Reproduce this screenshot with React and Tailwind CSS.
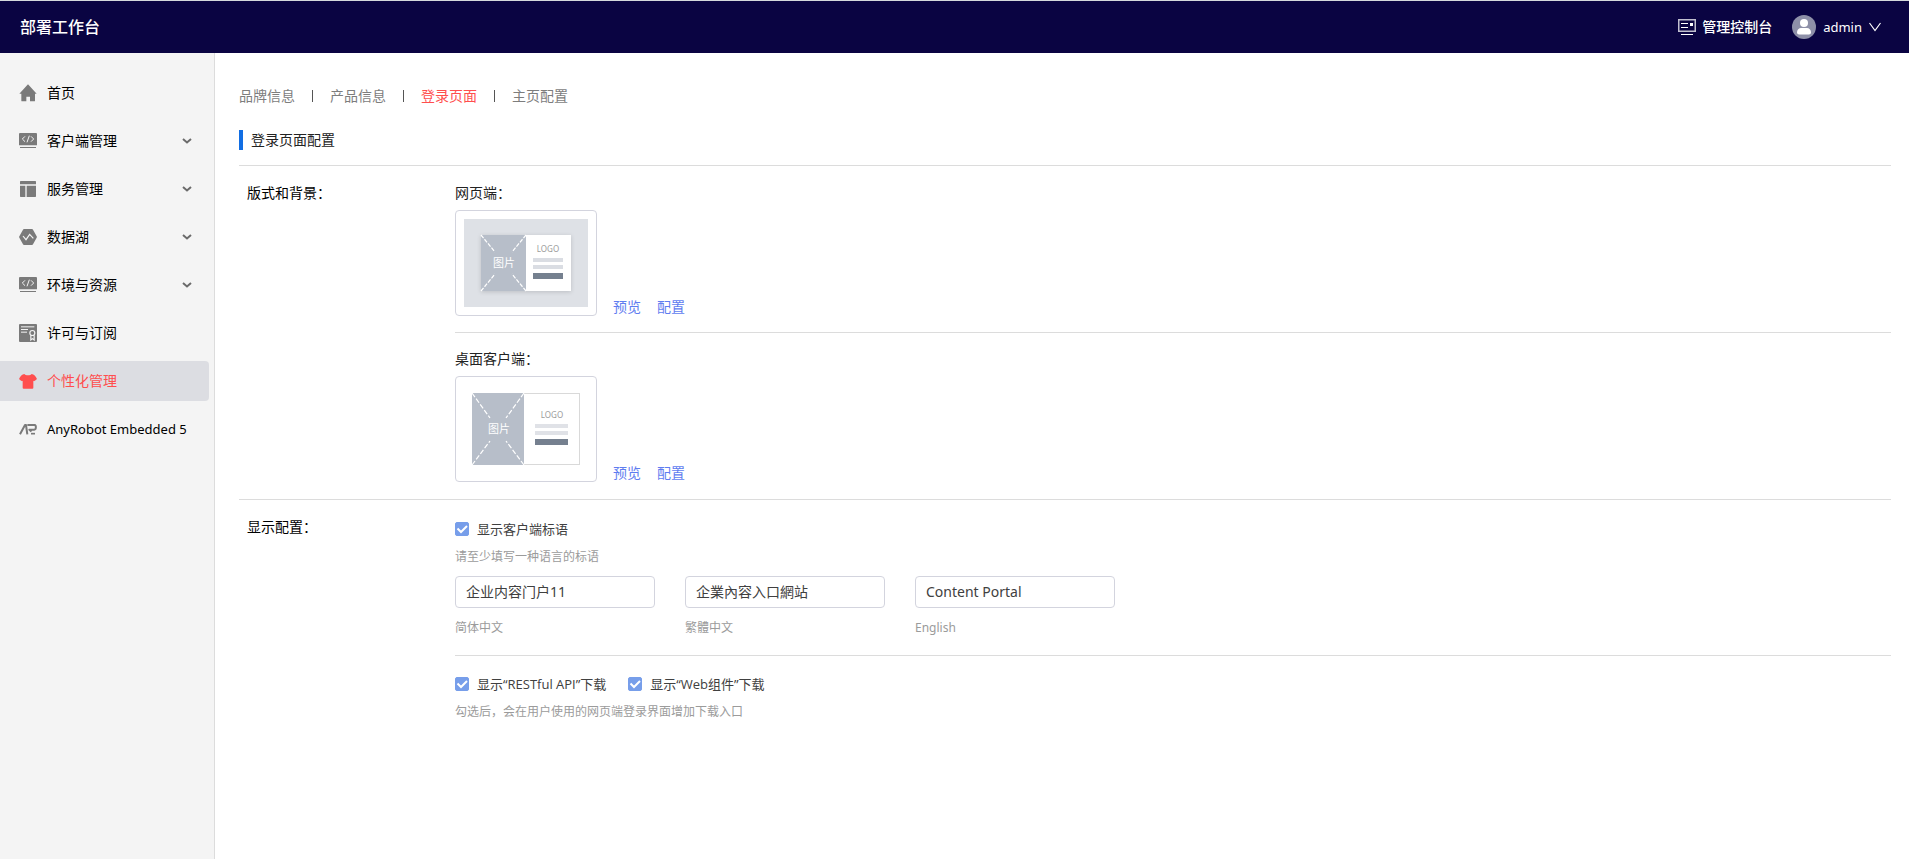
import { useState } from "react";

function HomeIcon() {
  return (
    <svg viewBox="0 0 54 54" className="size-[18px]" fill="currentColor" aria-hidden="true">
      <path d="M27 1 53 29h-5v21a2 2 0 0 1-2 2H33V38H22v14H9a2 2 0 0 1-2-2V29H1Z" />
    </svg>
  );
}

function CodeIcon() {
  return (
    <svg viewBox="0 0 54 54" className="size-[18px]" fill="none" aria-hidden="true">
      <path d="M3 3h48a3 3 0 0 1 3 3v34H0V6a3 3 0 0 1 3-3Z" fill="currentColor" />
      <path d="M3 46.500h48" stroke="currentColor" strokeWidth="3" />
      <path d="m18 13-8 8 8 8M36 13l8 8-8 8M31 11l-7 20" stroke="#f4f4f4" strokeWidth="3" />
    </svg>
  );
}

function ServiceIcon() {
  return (
    <svg viewBox="0 0 54 54" className="size-[18px]" fill="currentColor" aria-hidden="true">
      <path d="M5 3h44a2 2 0 0 1 2 2v8H3V5a2 2 0 0 1 2-2ZM3 17h16v34H5a2 2 0 0 1-2-2ZM23 17h28v32a2 2 0 0 1-2 2H23Z" />
    </svg>
  );
}

function DataIcon() {
  return (
    <svg viewBox="0 0 54 54" className="size-[18px]" fill="none" aria-hidden="true">
      <path d="M15 3h24a4 4 0 0 1 3 2l11 20a4 4 0 0 1 0 4L42 49a4 4 0 0 1-3 2H15a4 4 0 0 1-3-2L1 29a4 4 0 0 1 0-4L12 5a4 4 0 0 1 3-2Z" fill="currentColor" />
      <path d="m12 24 9 11 11-16 11 12" stroke="#f4f4f4" strokeWidth="3.500" />
    </svg>
  );
}

function LicenseIcon() {
  return (
    <svg viewBox="0 0 54 54" className="size-[18px]" fill="none" aria-hidden="true">
      <rect width="54" height="54" rx="3" fill="currentColor" />
      <path d="M6 8.500h40M6 16.500h21M6 24.500h18" stroke="#f4f4f4" strokeWidth="3" />
      <circle cx="40" cy="27" r="7.500" stroke="#f4f4f4" strokeWidth="3.500" />
      <path d="M35.500 34v14l5-4 5 4V34" stroke="#f4f4f4" strokeWidth="3.500" />
    </svg>
  );
}

function ShirtIcon() {
  return (
    <svg viewBox="0 0 54 54" className="size-[18px]" fill="currentColor" aria-hidden="true">
      <path d="M16 6c3 5 19 5 22 0 7 1 10 4 15 13 1 2 0 3-1 4l-6 4c-1 1-2 0-3-1v21a3 3 0 0 1-3 3H14a3 3 0 0 1-3-3V26c-1 1-2 2-3 1l-6-4c-1-1-2-2-1-4C6 10 9 7 16 6Z" />
    </svg>
  );
}

function RobotIcon() {
  return (
    <svg viewBox="0 0 54 54" className="size-[18px]" fill="none" stroke="currentColor" aria-hidden="true">
      <path d="M3 43 18 15h3l4 28" strokeWidth="6" strokeLinejoin="round" />
      <path d="M25 15h22c5 0 5 14-1 14H31l6 6" strokeWidth="6" strokeLinejoin="round" />
      <path d="M36 41h12" strokeWidth="5" />
    </svg>
  );
}

function Chevron() {
  return (
    <svg viewBox="0 0 10 6" className="h-1.5 w-2.5" fill="none" stroke="#6b6b6b" strokeWidth="2" aria-hidden="true">
      <path d="m1 1 4 3.500L9 1" />
    </svg>
  );
}

const NAV = [
  { label: "首页", Icon: HomeIcon },
  { label: "客户端管理", Icon: CodeIcon, sub: true },
  { label: "服务管理", Icon: ServiceIcon, sub: true },
  { label: "数据湖", Icon: DataIcon, sub: true },
  { label: "环境与资源", Icon: CodeIcon, sub: true },
  { label: "许可与订阅", Icon: LicenseIcon },
  { label: "个性化管理", Icon: ShirtIcon, active: true },
  { label: "AnyRobot Embedded 5", Icon: RobotIcon, latin: true },
];

function Sidebar() {
  return (
    <nav className="w-[215px] shrink-0 border-r border-[#dcdcdc] bg-[#f4f4f4] pt-5">
      <ul className="flex flex-col gap-2 pr-[5px]">
        {NAV.map(({ label, Icon, sub, active, latin }) => (
          <li key={label}>
            <a
              href="#"
              className={
                active
                  ? "flex h-10 items-center gap-2.5 rounded-r-sm bg-[#dcdde2] pr-[17px] pl-[19px] text-[#ff4e4e]"
                  : "flex h-10 items-center gap-2.5 pr-[17px] pl-[19px] text-black"
              }
            >
              <span className={active ? "text-[#ff4e4e]" : "text-[#7a7a7a]"}>
                <Icon />
              </span>
              <span className={latin ? "flex-1 text-[13px] leading-5 whitespace-nowrap" : "flex-1 whitespace-nowrap"}>
                {label}
              </span>
              {sub && <Chevron />}
            </a>
          </li>
        ))}
      </ul>
    </nav>
  );
}

function Header() {
  return (
    <header className="flex h-[53px] shrink-0 items-center justify-between border-t border-[#d5d9dc] bg-[#0a0442] pr-7 pl-5 text-white">
      <h1 className="text-base font-medium">部署工作台</h1>
      <div className="flex items-center gap-5">
        <a href="#" className="flex items-center gap-1.5 font-medium">
          <svg viewBox="0 0 18 18" className="size-[18px]" fill="none" stroke="#fff" aria-hidden="true">
            <rect x="0.750" y="1.750" width="16.500" height="11.500" strokeWidth="1.500" strokeOpacity="0.750" />
            <path d="M3 5.500h7M3 9.500h7M3 16.500h12" />
            <path d="M12 6.500h3" strokeWidth="3" />
          </svg>
          管理控制台
        </a>
        <button type="button" className="flex items-center gap-[7px] text-[13px] leading-5">
          <svg viewBox="0 0 24 24" className="size-6" aria-hidden="true">
            <circle cx="12" cy="12" r="12" fill="#8e90a8" />
            <circle cx="12" cy="8" r="4" fill="#fff" />
            <path d="M5 17.500c0-3 2-4.500 4-4.500h6c2 0 4 1.500 4 4.500 0 1-1 2-2 2H7c-1 0-2-1-2-2Z" fill="#fff" />
          </svg>
          admin
          <svg viewBox="0 0 12 10" className="h-2.5 w-3" fill="none" stroke="#fff" strokeWidth="1.200" aria-hidden="true">
            <path d="m0.500 1 5.500 7.500L11.500 1" />
          </svg>
        </button>
      </div>
    </header>
  );
}

function WebThumb() {
  return (
    <svg viewBox="0 0 140 104" className="h-[104px] w-[140px]" role="img" aria-label="网页端">
      <rect x="8" y="8" width="124" height="88" fill="#dee1e6" />
      <rect x="25" y="24" width="90" height="56" fill="#fff" className="drop-shadow-sm" />
      <rect x="25" y="24" width="45" height="56" fill="#b7bec9" />
      <path d="m25 24 14 17M70 24 56 41M25 80l14-17M70 80 56 63" stroke="#fff" strokeWidth="1.200" strokeDasharray="4 1.500" />
      <text x="48" y="56" textAnchor="middle" fontSize="11" fill="#fff">图片</text>
      <text x="92" y="41" textAnchor="middle" fontSize="8" fill="#9b9b9b">LOGO</text>
      <path d="M77 47h30v4H77ZM77 54h30v4H77Z" fill="#dadde3" />
      <path d="M77 62h30v6H77Z" fill="#75808f" />
    </svg>
  );
}

function DesktopThumb() {
  return (
    <svg viewBox="0 0 140 104" className="h-[104px] w-[140px]" role="img" aria-label="桌面客户端">
      <rect x="16.500" y="16.500" width="107" height="71" fill="#fff" stroke="#d9d9d9" />
      <rect x="16" y="16" width="52" height="72" fill="#b7bec9" />
      <path d="m16 16 18 25M68 16 50 41M16 88l18-24M68 88 50 64" stroke="#fff" strokeWidth="1.200" strokeDasharray="5 2" />
      <text x="43" y="56" textAnchor="middle" fontSize="11" fill="#fff">图片</text>
      <text x="96" y="41" textAnchor="middle" fontSize="8" fill="#9b9b9b">LOGO</text>
      <path d="M79 47h33v4H79ZM79 54h33v4H79Z" fill="#e0e2e7" />
      <path d="M79 62h33v6H79Z" fill="#75808f" />
    </svg>
  );
}

function LayoutOption({ title, children }) {
  return (
    <div className="flex flex-col gap-[7px]">
      <h3 className="text-[#222]">{title}</h3>
      <div className="flex items-end gap-4">
        <div className="rounded-sm border border-[#d3d4de]">{children}</div>
        <a href="#" className="leading-[18px] text-[#5f7df0]">预览</a>
        <a href="#" className="leading-[18px] text-[#5f7df0]">配置</a>
      </div>
    </div>
  );
}

function Check({ label }) {
  const [on, setOn] = useState(true);
  return (
    <label className="flex items-center gap-2 font-['Open_Sans','Noto_Sans_CJK_SC',sans-serif] text-[13px] leading-5 text-[#404040]">
      <span className="grid size-3.5">
        <input
          type="checkbox"
          checked={on}
          onChange={(e) => setOn(e.target.checked)}
          className="peer col-start-1 row-start-1 size-3.5 appearance-none rounded-xs border border-[#c4c8d4] bg-white checked:border-[#779eea] checked:bg-[#779eea]"
        />
        <svg viewBox="0 0 14 14" className="pointer-events-none invisible col-start-1 row-start-1 size-3.5 peer-checked:visible" fill="none" stroke="#fff" strokeWidth="2" aria-hidden="true">
          <path d="m2.500 6.500 3.500 3.500 6-6" />
        </svg>
      </span>
      {label}
    </label>
  );
}

function Slogan({ id, label, value }) {
  return (
    <div className="flex w-[200px] flex-col gap-2.5">
      <input
        id={id}
        type="text"
        defaultValue={value}
        className="h-8 w-full rounded-sm border border-[#d3d4de] bg-white px-2.5 pb-0.5 text-sm text-[#404040]"
      />
      <label htmlFor={id} className="text-xs leading-5 text-[#9b9b9b]">{label}</label>
    </div>
  );
}

const TABS = ["品牌信息", "产品信息", "登录页面", "主页配置"];

export default function App() {
  return (
    <div className="flex min-h-screen flex-col bg-white font-['Noto_Sans','Noto_Sans_CJK_SC',sans-serif] text-sm leading-5">
      <Header />
      <div className="flex flex-1">
        <Sidebar />
        <main className="min-w-0 flex-1 pt-[33px] pr-[18px] pl-6">
          <div className="flex items-center">
            {TABS.map((tab, i) => (
              <div key={tab} className="flex items-center">
                {i > 0 && <span className="mx-[17px] h-3 w-px bg-[#555]" />}
                <a href="#" className={tab === "登录页面" ? "text-[#ff4e4e]" : "text-[#7d7d7d]"}>{tab}</a>
              </div>
            ))}
          </div>

          <div className="mt-6 border-b border-[#dcdcdc] pb-[15px]">
            <h2 className="border-l-4 border-[#126ee3] pl-2 text-[#222]">登录页面配置</h2>
          </div>

          <section className="flex border-b border-[#dcdcdc] pt-[17px] pb-[17px] pl-2">
            <h3 className="w-[208px] shrink-0 text-black">版式和背景：</h3>
            <div className="flex-1">
              <div className="border-b border-[#dcdcdc] pb-4">
                <LayoutOption title="网页端：">
                  <WebThumb />
                </LayoutOption>
              </div>
              <div className="pt-4">
                <LayoutOption title="桌面客户端：">
                  <DesktopThumb />
                </LayoutOption>
              </div>
            </div>
          </section>

          <section className="flex pt-[17px] pl-2">
            <h3 className="w-[208px] shrink-0 text-black">显示配置：</h3>
            <div className="flex-1 pt-0.5">
              <div className="border-b border-[#dcdcdc] pb-[17px]">
                <Check label="显示客户端标语" />
                <p className="mt-2 mb-[9px] text-xs leading-5 text-[#9b9b9b]">请至少填写一种语言的标语</p>
                <div className="flex gap-[30px]">
                  <Slogan id="slogan-cn" label="简体中文" value="企业内容门户11" />
                  <Slogan id="slogan-tw" label="繁體中文" value="企業內容入口網站" />
                  <Slogan id="slogan-en" label="English" value="Content Portal" />
                </div>
              </div>
              <div className="pt-[18px]">
                <div className="flex gap-[22px]">
                  <Check label="显示“RESTful API”下载" />
                  <Check label="显示“Web组件”下载" />
                </div>
                <p className="mt-2 text-xs leading-5 text-[#9b9b9b]">勾选后，会在用户使用的网页端登录界面增加下载入口</p>
              </div>
            </div>
          </section>
        </main>
      </div>
    </div>
  );
}
